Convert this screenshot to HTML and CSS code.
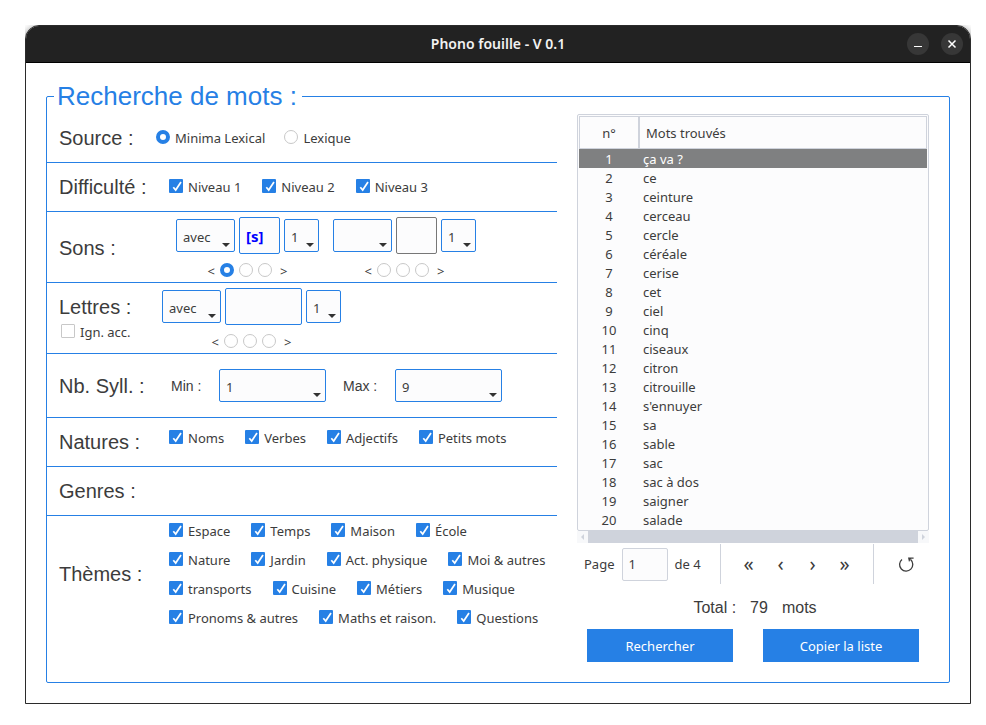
FILE: index.html
```html
<!DOCTYPE html>
<html lang="fr">
<head>
<meta charset="utf-8">
<title>Phono fouille - V 0.1</title>
<link rel="stylesheet" href="styles.css">
</head>
<body>
<div class="window">
  <header class="titlebar">
    <h1 class="title">Phono fouille - V 0.1</h1>
    <div class="win-controls">
      <button class="win-btn" type="button" aria-label="Réduire"><svg width="22" height="22" viewBox="0 0 22 22"><path d="M7 13.5h8" stroke="#fff" fill="none"/></svg></button>
      <button class="win-btn" type="button" aria-label="Fermer"><svg width="22" height="22" viewBox="0 0 22 22"><path d="M7.5 7.5l7 7M14.5 7.5l-7 7" stroke="#fff" stroke-width="1.5" fill="none"/></svg></button>
    </div>
  </header>
  <main class="content">
    <fieldset class="search">
      <legend class="search-title">Recherche de mots :</legend>
      <div class="columns">
        <div class="criteria">
          <div class="row">
            <span class="row-label label-source">Source :</span>
            <div class="choices choices-source">
              <label class="choice"><input type="radio" name="source" checked>Minima Lexical</label>
              <label class="choice"><input type="radio" name="source">Lexique</label>
            </div>
          </div>
          <div class="row">
            <span class="row-label">Difficulté :</span>
            <div class="choices">
              <label class="choice"><input type="checkbox" checked>Niveau 1</label>
              <label class="choice"><input type="checkbox" checked>Niveau 2</label>
              <label class="choice"><input type="checkbox" checked>Niveau 3</label>
            </div>
          </div>
          <div class="row row-tall">
            <span class="row-label label-sounds">Sons :</span>
            <div class="groups">
              <div class="group">
                <div class="group-fields">
                  <span class="combo combo-mode"><select aria-label="Condition du son 1"><option>avec</option><option>sans</option></select></span>
                  <input class="box box-sound" type="text" value="[s]" aria-label="Son 1">
                  <span class="combo combo-count"><select aria-label="Nombre du son 1"><option>1</option><option>2</option></select></span>
                </div>
                <div class="position"><span>&lt;</span>
                  <input type="radio" name="pos1" aria-label="Début" checked><input type="radio" name="pos1" aria-label="Milieu"><input type="radio" name="pos1" aria-label="Fin">
                  <span class="after">&gt;</span></div>
              </div>
              <div class="group">
                <div class="group-fields">
                  <span class="combo combo-mode"><select aria-label="Condition du son 2"><option></option><option>avec</option></select></span>
                  <input class="box box-sound box-idle" type="text" aria-label="Son 2">
                  <span class="combo combo-count"><select aria-label="Nombre du son 2"><option>1</option><option>2</option></select></span>
                </div>
                <div class="position"><span>&lt;</span>
                  <input type="radio" name="pos2" aria-label="Début"><input type="radio" name="pos2" aria-label="Milieu"><input type="radio" name="pos2" aria-label="Fin">
                  <span class="after">&gt;</span></div>
              </div>
            </div>
          </div>
          <div class="row row-tall">
            <div class="row-label label-letters">
              <span>Lettres :</span>
              <label class="choice"><input type="checkbox">Ign. acc.</label>
            </div>
            <div class="group">
              <div class="group-fields">
                <span class="combo combo-mode"><select aria-label="Condition des lettres"><option>avec</option><option>sans</option></select></span>
                <input class="box box-letters" type="text" aria-label="Lettres">
                <span class="combo combo-count"><select aria-label="Nombre de lettres"><option>1</option><option>2</option></select></span>
              </div>
              <div class="position"><span>&lt;</span>
                <input type="radio" name="pos3" aria-label="Début"><input type="radio" name="pos3" aria-label="Milieu"><input type="radio" name="pos3" aria-label="Fin">
                <span class="after">&gt;</span></div>
            </div>
          </div>
          <div class="row row-syllables">
            <span class="row-label">Nb. Syll. :</span>
            <div class="bounds">
              <label for="min">Min :</label>
              <span class="combo combo-bound"><select id="min"><option>1</option><option>2</option></select></span>
              <label for="max">Max :</label>
              <span class="combo combo-bound"><select id="max"><option>9</option><option>8</option></select></span>
            </div>
          </div>
          <div class="row">
            <span class="row-label">Natures :</span>
            <div class="choices choices-high">
              <label class="choice"><input type="checkbox" checked>Noms</label>
              <label class="choice"><input type="checkbox" checked>Verbes</label>
              <label class="choice"><input type="checkbox" checked>Adjectifs</label>
              <label class="choice"><input type="checkbox" checked>Petits mots</label>
            </div>
          </div>
          <div class="row">
            <span class="row-label">Genres :</span>
          </div>
          <div class="row row-themes">
            <span class="row-label">Thèmes :</span>
            <div class="themes">
              <div class="choices">
                <label class="choice"><input type="checkbox" checked>Espace</label>
                <label class="choice"><input type="checkbox" checked>Temps</label>
                <label class="choice"><input type="checkbox" checked>Maison</label>
                <label class="choice"><input type="checkbox" checked>École</label>
              </div>
              <div class="choices">
                <label class="choice"><input type="checkbox" checked>Nature</label>
                <label class="choice"><input type="checkbox" checked>Jardin</label>
                <label class="choice"><input type="checkbox" checked>Act. physique</label>
                <label class="choice"><input type="checkbox" checked>Moi &amp; autres</label>
              </div>
              <div class="choices">
                <label class="choice"><input type="checkbox" checked>transports</label>
                <label class="choice"><input type="checkbox" checked>Cuisine</label>
                <label class="choice"><input type="checkbox" checked>Métiers</label>
                <label class="choice"><input type="checkbox" checked>Musique</label>
              </div>
              <div class="choices">
                <label class="choice"><input type="checkbox" checked>Pronoms &amp; autres</label>
                <label class="choice"><input type="checkbox" checked>Maths et raison.</label>
                <label class="choice"><input type="checkbox" checked>Questions</label>
              </div>
            </div>
          </div>
        </div>
        <section class="results">
          <div class="table-frame">
            <table class="words">
              <thead><tr><th class="num">n°</th><th>Mots trouvés</th></tr></thead>
              <tbody>
                <tr class="selected"><td class="num">1</td><td>ça va ?</td></tr>
                <tr><td class="num">2</td><td>ce</td></tr>
                <tr><td class="num">3</td><td>ceinture</td></tr>
                <tr><td class="num">4</td><td>cerceau</td></tr>
                <tr><td class="num">5</td><td>cercle</td></tr>
                <tr><td class="num">6</td><td>céréale</td></tr>
                <tr><td class="num">7</td><td>cerise</td></tr>
                <tr><td class="num">8</td><td>cet</td></tr>
                <tr><td class="num">9</td><td>ciel</td></tr>
                <tr><td class="num">10</td><td>cinq</td></tr>
                <tr><td class="num">11</td><td>ciseaux</td></tr>
                <tr><td class="num">12</td><td>citron</td></tr>
                <tr><td class="num">13</td><td>citrouille</td></tr>
                <tr><td class="num">14</td><td>s'ennuyer</td></tr>
                <tr><td class="num">15</td><td>sa</td></tr>
                <tr><td class="num">16</td><td>sable</td></tr>
                <tr><td class="num">17</td><td>sac</td></tr>
                <tr><td class="num">18</td><td>sac à dos</td></tr>
                <tr><td class="num">19</td><td>saigner</td></tr>
                <tr><td class="num">20</td><td>salade</td></tr>
              </tbody>
            </table>
          </div>
          <div class="scrollbar">
            <svg width="11" height="12" viewBox="0 0 11 12"><path d="M7 3v6L4 6z" fill="#cfd3dc"/></svg>
            <div class="thumb"></div>
            <svg width="11" height="12" viewBox="0 0 11 12"><path d="M4 3v6l3-3z" fill="#cfd3dc"/></svg>
          </div>
          <nav class="pager">
            <label for="page">Page</label>
            <input class="page-box" id="page" type="text" value="1">
            <span>de 4</span>
            <div class="pager-nav">
              <button type="button" aria-label="Première page">«</button>
              <button type="button" aria-label="Page précédente">‹</button>
              <button type="button" aria-label="Page suivante">›</button>
              <button type="button" aria-label="Dernière page">»</button>
            </div>
            <button class="reload" type="button" aria-label="Recharger"><svg width="18" height="18" viewBox="0 0 18 18"><path d="M5 4.4A6.6 6.6 0 1 0 13.6 4.6" fill="none" stroke="#3c3c3c" stroke-width="1.3"/><path d="M11 2.4h5.6v1.4H14L12 7z" fill="#3c3c3c"/></svg></button>
          </nav>
          <p class="total"><span>Total :</span><span>79</span><span>mots</span></p>
          <div class="actions">
            <button class="action action-search" type="button">Rechercher</button>
            <button class="action action-copy" type="button">Copier la liste</button>
          </div>
        </section>
      </div>
    </fieldset>
  </main>
</div>
</body>
</html>
```
FILE: styles.css
```css
:root {
  --blue: #2680e5;
  --text: #3c3c3c;
  --line: #cfd3dc;
  --field: #fcfcfd;
}

* {
  box-sizing: border-box;
}

body {
  margin: 25px 15px 21px 25px;
  background: #fff;
  color: var(--text);
  font: 13px/18px "Noto Sans", sans-serif;
}

button,
input,
select {
  margin: 0;
  color: inherit;
  font: inherit;
}

.window {
  border: 1px solid #2b2b2b;
  border-radius: 14px 14px 0 0;
  background: #fff;
  box-shadow: 0 3px 8px rgba(0, 0, 0, 0.6);
}

.titlebar {
  display: grid;
  grid-template-columns: 1fr auto 1fr;
  align-items: center;
  min-height: 37px;
  padding: 0 7px;
  border-bottom: 1px solid #000;
  border-radius: 13px 13px 0 0;
  background: #222;
}

.title {
  grid-column: 2;
  margin: 0;
  color: #f2f2f2;
  font: 600 14px/20px "Noto Sans", sans-serif;
}

.win-controls {
  display: flex;
  justify-content: flex-end;
  gap: 12px;
}

.win-btn {
  width: 22px;
  height: 22px;
  padding: 0;
  border: 0;
  border-radius: 50%;
  background: #373737;
}

.win-btn svg,
.reload svg {
  display: block;
}

.content {
  padding: 18px 20px 20px;
}

.search {
  min-width: 0;
  margin: 0;
  padding: 0 20px 20px 0;
  border: 1px solid var(--blue);
  border-radius: 2px;
}

.search-title {
  margin-left: 7px;
  padding: 0 5px 0 3px;
  color: var(--blue);
  font: 26px/30px "Liberation Sans", sans-serif;
}

.columns {
  display: grid;
  grid-template-columns: 510fr 352fr;
  gap: 20px;
  padding-top: 3px;
}

.row {
  display: flex;
  align-items: center;
  min-height: 49px;
  padding-left: 12px;
  border-bottom: 1px solid var(--blue);
}

.row-tall {
  min-height: 71px;
  padding-top: 2px;
}

.row-syllables {
  min-height: 64px;
}

.row-themes {
  border-bottom: 0;
}

.row-label {
  flex: none;
  width: 110px;
  font: 20px/24px "Liberation Sans", sans-serif;
}

.label-source {
  width: 97px;
}

.label-sounds {
  width: 117px;
}

.label-letters {
  width: 103px;
}

.label-letters .choice {
  padding: 2px 0 0 2px;
  font: 13px/22px "Noto Sans", sans-serif;
}

.choices {
  display: flex;
  gap: 21px;
  white-space: nowrap;
}

.choices-source {
  gap: 19px;
}

.choices-high {
  padding-bottom: 8px;
}

.choice {
  display: flex;
  align-items: center;
  gap: 5px;
}

.themes .choices {
  align-items: center;
  min-height: 29px;
}

input[type="checkbox"],
input[type="radio"] {
  appearance: none;
  flex: none;
  width: 14px;
  height: 14px;
  margin-bottom: 2px;
  border: 1px solid #c8c8c8;
  background: #fff;
}

input[type="checkbox"] {
  border-radius: 1px;
}

input[type="checkbox"]:checked {
  border: 0;
  background: var(--blue) url("data:image/svg+xml,%3Csvg xmlns='http://www.w3.org/2000/svg' viewBox='0 0 14 14'%3E%3Cpath d='M4.3 8.2l2.4 2.8L12 3' fill='none' stroke='white' stroke-width='1.7'/%3E%3C/svg%3E");
}

input[type="radio"] {
  border-radius: 50%;
}

input[type="radio"]:checked {
  border: 4px solid var(--blue);
}

.groups {
  display: flex;
  gap: 14px;
}

.group {
  display: flex;
  flex-direction: column;
  align-items: center;
  gap: 9px;
}

.group-fields {
  display: flex;
  align-items: center;
  gap: 4px;
}

.combo {
  position: relative;
  display: block;
}

.combo::after {
  content: "";
  position: absolute;
  right: 5px;
  bottom: 5px;
  width: 8px;
  height: 4px;
  background: #333;
  clip-path: polygon(0 0, 100% 0, 50% 100%);
  pointer-events: none;
}

.combo select {
  appearance: none;
  display: block;
  width: 100%;
  height: 33px;
  padding: 2px 6px 0;
  border: 1px solid var(--blue);
  border-radius: 2px;
  background: var(--field);
}

.combo-mode {
  width: 59px;
}

.combo-count {
  width: 35px;
}

.combo-bound {
  width: 107px;
}

.box {
  height: 37px;
  padding: 0 6px;
  border: 1px solid var(--blue);
  border-radius: 2px;
  background: var(--field);
}

.box-sound {
  width: 41px;
  color: #00f;
  font-size: 15px;
  font-weight: 700;
}

.box-letters {
  width: 77px;
}

.box-idle {
  border-color: #777;
}

.position {
  display: flex;
  align-items: center;
  gap: 5px;
  line-height: 16px;
}

.position .after {
  margin-left: 3px;
}

.bounds {
  display: flex;
  align-items: center;
  padding-left: 2px;
  font: 14px/18px "Liberation Sans", sans-serif;
}

.bounds label {
  width: 48px;
}

.bounds select {
  font: 13px/18px "Noto Sans", sans-serif;
}

.combo-bound + label {
  width: 69px;
  padding-left: 17px;
}

.table-frame {
  padding: 1px;
  border: 1px solid var(--line);
  border-radius: 2px;
  background: var(--field);
}

.words {
  width: 100%;
  border-spacing: 0;
  table-layout: fixed;
}

.words th {
  height: 33px;
  padding: 0 6px;
  border: 1px solid var(--line);
  font-weight: 400;
  text-align: left;
}

.words td {
  height: 19px;
  padding: 1px 4px 0;
}

.words .num {
  width: 60px;
  padding-right: 0;
  padding-left: 0;
  text-align: center;
}

.selected {
  background: #7f8081;
  color: #fff;
}

.scrollbar {
  display: flex;
  background: #f7f8fa;
}

.scrollbar svg {
  display: block;
}

.thumb {
  flex: 1;
  background: var(--line);
}

.pager {
  display: flex;
  align-items: center;
  margin-top: 1px;
  padding-left: 7px;
}

.page-box {
  width: 46px;
  height: 33px;
  margin: 0 7px;
  padding: 0 6px;
  border: 1px solid var(--line);
  border-radius: 2px;
  background: var(--field);
}

.pager-nav {
  display: flex;
  align-items: center;
  min-height: 40px;
  margin-left: 19px;
  padding: 0 12px;
  border-right: 1px solid var(--line);
  border-left: 1px solid var(--line);
}

.pager-nav button,
.reload {
  width: 32px;
  padding: 0;
  border: 0;
  background: none;
  font-size: 20px;
}

.reload {
  display: flex;
  justify-content: center;
  margin-left: 16px;
}

.total {
  display: flex;
  justify-content: center;
  gap: 14px;
  margin: 14px 0 12px;
  padding-left: 4px;
  font: 16px/19px "Liberation Sans", sans-serif;
}

.actions {
  display: grid;
  grid-template-columns: 146fr 156fr;
  gap: 30px;
  padding: 0 10px;
}

.action {
  height: 33px;
  padding: 1px 0 0;
  border: 0;
  background: var(--blue);
  color: #fff;
}
```
